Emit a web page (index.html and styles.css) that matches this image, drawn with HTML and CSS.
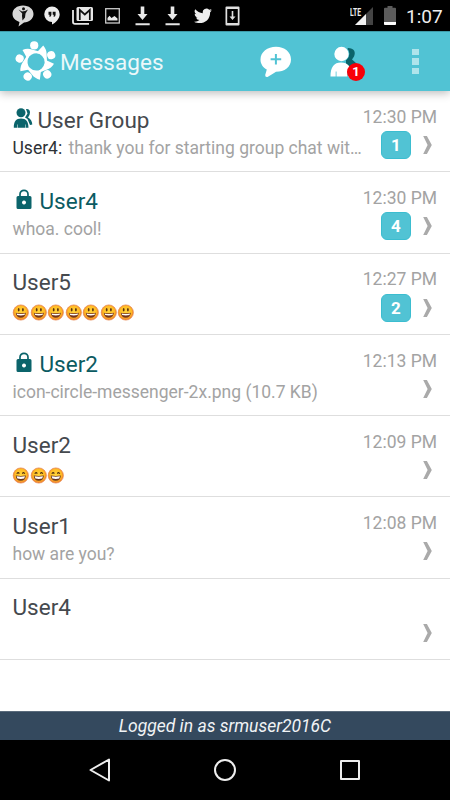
FILE: index.html
```html
<!DOCTYPE html>
<html lang="en">
<head>
<meta charset="utf-8">
<title>Messages</title>
<link rel="stylesheet" href="styles.css">
</head>
<body>
<svg class="defs" aria-hidden="true">
  <defs>
    <radialGradient id="face" cx="50%" cy="45%" r="52%">
      <stop offset="0" stop-color="#ffd43c"/><stop offset=".7" stop-color="#ffbd25"/><stop offset="1" stop-color="#f0812a"/>
    </radialGradient>
    <symbol id="smile" viewBox="0 0 17.5 17">
      <circle cx="8.8" cy="8.5" r="7.6" fill="url(#face)" stroke="#e5824a" stroke-width=".7"/>
      <ellipse cx="6.7" cy="5.7" rx=".9" ry="1.8" fill="#5b3210"/><ellipse cx="10.9" cy="5.7" rx=".9" ry="1.8" fill="#5b3210"/>
      <path d="M3.7 8.7Q8.8 10 13.9 8.7Q13.2 13.8 8.8 13.8T3.7 8.7Z" fill="#76351c"/>
      <path d="M4.6 9.4Q8.8 10.4 13 9.4L12.5 11Q8.8 11.8 5.1 11Z" fill="#fff"/>
    </symbol>
    <symbol id="grin" viewBox="0 0 17.5 17">
      <circle cx="8.8" cy="8.5" r="7.6" fill="url(#face)" stroke="#e5824a" stroke-width=".7"/>
      <path d="M4.8 6.8Q6 4.5 7.3 6.6M10.3 6.6Q11.6 4.5 12.8 6.8" fill="none" stroke="#4a2b10" stroke-width="1.1"/>
      <path d="M3.7 8.5Q8.8 9.3 13.9 8.5Q13.4 13.8 8.8 13.8T3.7 8.5Z" fill="#69351d"/>
      <path d="M4.6 9.3Q8.8 10 13 9.3L12.2 11.6Q8.8 12.4 5.4 11.6Z" fill="#fff"/>
    </symbol>
    <symbol id="lock" viewBox="0 0 16 21">
      <path d="M4 8V5.3a4 4 0 0 1 8 0V8" fill="none" stroke="#0b646b" stroke-width="1.7"/>
      <path fill-rule="evenodd" d="M2 7H14Q15.5 7 15.5 8.5V18.5Q15.5 20 14 20H2Q.5 20 .5 18.500V8.500Q.5 7 2 7ZM8 11.500a2 2 0 1 0 .01 0Z" fill="#0b646b"/>
    </symbol>
    <symbol id="chevron" viewBox="0 0 9 18">
      <path d="M.2 0H3.900L8.800 9L3.900 18H.2L4.600 9Z" fill="#aaa"/>
    </symbol>
  </defs>
</svg>
<div class="screen">
  <div class="status">
    <div class="notices">
      <svg width="22" height="22" viewBox="0 0 22 22"><path d="M11 .5C17 .5 21.500 4 21.500 9S17 17 12 17.500L6.500 21.500 7.500 17C3 15.500.5 12.500.5 9 .5 4 5 .5 11 .5Z" fill="#d8d8d8"/><circle cx="11.500" cy="3.800" r="1.500" fill="#111"/><path d="M6.500 4.500 10 6.500 13 6 16 4.500 13.500 8.500 13 12.500 10.500 15.500 10 11 10.200 8.500Z" fill="#111"/></svg>
      <svg width="16" height="19" viewBox="0 0 16 19"><path d="M8 .5a7.700 7.700 0 0 1 7.700 7.700C15.700 12.500 12 16.500 8 18.500V16A7.700 7.700 0 1 1 8 .5Z" fill="#ededed"/><path d="M4.500 5.700H7.400V8.700Q7.400 10.500 5.500 11V8.700H4.500ZM8.700 5.700H11.600V8.700Q11.600 10.500 9.700 11V8.700H8.700Z" fill="#111"/></svg>
      <svg width="21" height="19" viewBox="0 0 21 19"><path d="M1 4V16Q1 17.800 3 17.800H17" fill="none" stroke="#e8e8e8" stroke-width="1.800"/><rect x="4.500" y="1" width="16.500" height="14" rx="1.500" fill="#e8e8e8"/><path d="M7.800 14V4L12.800 8.500 17.800 4V14" fill="none" stroke="#111" stroke-width="1.700"/></svg>
      <svg width="15" height="16" viewBox="0 0 15 16"><rect x=".7" y=".7" width="13.600" height="14.300" fill="none" stroke="#ccc" stroke-width="1.300"/><path d="M2.500 12.500V10L4.500 7.800 6.500 10 9.500 8 12.500 10.500V12.500Z" fill="#e8e8e8"/></svg>
      <svg width="15" height="20" viewBox="0 0 15 20"><path d="M5.700.5H9.300V8H12.500L7.500 14 2.500 8H5.700ZM.5 17.300H14.700V19.300H.5Z" fill="#e8e8e8"/></svg>
      <svg width="15" height="20" viewBox="0 0 15 20"><path d="M5.700.5H9.300V8H12.500L7.500 14 2.500 8H5.700ZM.5 17.300H14.700V19.300H.5Z" fill="#e8e8e8"/></svg>
      <svg width="18" height="16" viewBox="0 0 24 20"><path fill="#eee" d="M24 2.400a10 10 0 0 1-2.800.8A5 5 0 0 0 23.300.5a10 10 0 0 1-3.100 1.200A4.900 4.900 0 0 0 11.800 6.200 14 14 0 0 1 1.700 1 4.900 4.900 0 0 0 3.200 7.600 5 5 0 0 1 1 7a4.900 4.900 0 0 0 3.900 4.900 5 5 0 0 1-2.200.1 4.900 4.900 0 0 0 4.600 3.400A10 10 0 0 1 0 17.500C9 22.500 21.700 18 21.500 5Z"/></svg>
      <svg width="15" height="20" viewBox="0 0 15 20"><path fill="#e0e0e0" fill-rule="evenodd" d="M1.500.5H13.500Q14.500.5 14.500 1.500V18.500Q14.500 19.500 13.500 19.500H1.500Q.5 19.500.5 18.500V1.500Q.5.500 1.500.5ZM2.200 3V17H12.800V3ZM6.700 5H8.300V10.500H10.500L7.500 14 4.500 10.500H6.700Z"/></svg>
    </div>
    <div class="signal">
      <span class="lte">LTE</span>
      <svg width="18" height="18" viewBox="0 0 18 18"><path d="M18 0V18H0Z" fill="#444"/><path d="M11 7V18H0Z" fill="#f2f2f2"/></svg>
    </div>
    <svg class="battery" width="12" height="19" viewBox="0 0 12 19"><path d="M3.500 0H8.500V1.700H11Q12 1.700 12 2.700V18Q12 19 11 19H1Q0 19 0 18V2.700Q0 1.700 1 1.700H3.500Z" fill="#5b5b5b"/><path d="M0 16H12V18Q12 19 11 19H1Q0 19 0 18Z" fill="#fff"/></svg>
    <span class="clock">1:07</span>
  </div>

  <header class="bar">
    <svg class="logo" width="42" height="42" viewBox="-21 -21 42 42">
      <g fill="#fff">
        <g id="person"><circle cx="-1.800" cy="-16.600" r="4.100"/><path d="M-13.500-12Q-9-14-4-12.500L4-10.300 3-8.500Q-5-9.500-8.500-3Z"/></g>
        <use href="#person" transform="rotate(72)"/><use href="#person" transform="rotate(144)"/><use href="#person" transform="rotate(216)"/><use href="#person" transform="rotate(288)"/>
      </g>
    </svg>
    <h1 class="title">Messages</h1>
    <svg class="compose" width="32" height="32" viewBox="0 0 32 32"><path d="M16 .8C24.500.8 31 6 31 13.500S24.500 25.800 16 25.800Q12 28.500 7.500 31 5 31.500 5.200 29L6.800 23.500C3 21.500.5 18 .5 13.500.5 6 7.500.8 16 .8Z" fill="#fff"/><path d="M15.900 8V18.500M10.600 13.250H21.200" stroke="#51c3d4" stroke-width="2"/></svg>
    <div class="contacts">
      <svg width="28" height="32" viewBox="0 0 28 32"><path d="M18 2C24 2 26 6 24 10.500L22 13.500 26 17 27 21H16V4Z" fill="#0b646b"/><circle cx="11.500" cy="7.700" r="7.800" fill="#51c3d4"/><circle cx="11.500" cy="8" r="7.200" fill="#fff"/><path d="M.5 30.500C.5 21 4 16.500 11 16.500S22 21 22 30.500H18V25H17.300V30.500H6.500V25.500H5.700V30.500Z" fill="#fff"/></svg>
      <span class="alert">1</span>
    </div>
    <div class="more"><i></i><i></i><i></i></div>
  </header>

  <main class="list">
    <article class="row">
      <div class="body">
        <h2 class="name"><svg class="group" width="20" height="20" viewBox="0 0 20 20"><path d="M13 1Q17 .5 17 4.500 17 7 15 9.500 19 11.500 19.300 16.500L17 17 14.500 11 12 9.500 14.500 5.500Z" fill="#0b646b"/><circle cx="8" cy="4.800" r="4.500" fill="#0b646b"/><path d="M.8 19.700C.8 13.500 3 10.500 8 10.500S15.500 13.500 15.500 19.700H12.700V16.500H12.200V19.700H4.500V16.500H4V19.700Z" fill="#0b646b"/></svg>User Group</h2>
        <p class="preview"><b>User4:</b> thank you for starting group chat wit…</p>
      </div>
      <div class="meta"><time>12:30 PM</time><div class="end"><span class="count">1</span><svg class="chevron"><use href="#chevron"/></svg></div></div>
    </article>
    <article class="row">
      <div class="body">
        <h2 class="name secure"><svg class="lock"><use href="#lock"/></svg>User4</h2>
        <p class="preview">whoa. cool!</p>
      </div>
      <div class="meta"><time>12:30 PM</time><div class="end"><span class="count">4</span><svg class="chevron"><use href="#chevron"/></svg></div></div>
    </article>
    <article class="row">
      <div class="body">
        <h2 class="name">User5</h2>
        <p class="preview faces"><svg><use href="#smile"/></svg><svg><use href="#smile"/></svg><svg><use href="#smile"/></svg><svg><use href="#smile"/></svg><svg><use href="#smile"/></svg><svg><use href="#smile"/></svg><svg><use href="#smile"/></svg></p>
      </div>
      <div class="meta"><time>12:27 PM</time><div class="end"><span class="count">2</span><svg class="chevron"><use href="#chevron"/></svg></div></div>
    </article>
    <article class="row">
      <div class="body">
        <h2 class="name secure"><svg class="lock"><use href="#lock"/></svg>User2</h2>
        <p class="preview">icon-circle-messenger-2x.png (10.7 KB)</p>
      </div>
      <div class="meta"><time>12:13 PM</time><div class="end"><svg class="chevron"><use href="#chevron"/></svg></div></div>
    </article>
    <article class="row">
      <div class="body">
        <h2 class="name">User2</h2>
        <p class="preview faces"><svg><use href="#grin"/></svg><svg><use href="#grin"/></svg><svg><use href="#grin"/></svg></p>
      </div>
      <div class="meta"><time>12:09 PM</time><div class="end"><svg class="chevron"><use href="#chevron"/></svg></div></div>
    </article>
    <article class="row">
      <div class="body">
        <h2 class="name">User1</h2>
        <p class="preview">how are you?</p>
      </div>
      <div class="meta"><time>12:08 PM</time><div class="end"><svg class="chevron"><use href="#chevron"/></svg></div></div>
    </article>
    <article class="row">
      <div class="body"><h2 class="name">User4</h2></div>
      <div class="meta"><time></time><div class="end"><svg class="chevron"><use href="#chevron"/></svg></div></div>
    </article>
  </main>

  <footer class="account">Logged in as srmuser2016C</footer>
  <nav class="nav">
    <svg width="24" height="26" viewBox="0 0 24 26"><path d="M21 2.500V23.500L2.500 13Z" fill="none" stroke="#eee" stroke-width="2" stroke-linejoin="round"/></svg>
    <svg width="24" height="24" viewBox="0 0 24 24"><circle cx="12" cy="12" r="10" fill="none" stroke="#eee" stroke-width="2"/></svg>
    <svg width="24" height="24" viewBox="0 0 24 24"><rect x="3" y="3" width="18" height="18" fill="none" stroke="#eee" stroke-width="2" stroke-linejoin="round"/></svg>
  </nav>
</div>
</body>
</html>
```
FILE: styles.css
```css
* { box-sizing: border-box; }
body { margin: 0; font-family: Roboto, "Liberation Sans", sans-serif; background: #fff; }
h1, h2, p { margin: 0; font-weight: 400; }
.defs { position: absolute; width: 0; height: 0; }
.screen { width: 450px; height: 800px; display: flex; flex-direction: column; overflow: hidden; }

.status { height: 31px; flex: none; background: #000; color: #eee; display: flex; align-items: center; padding: 0 10px 0 12px; }
.notices { display: flex; align-items: center; gap: 12px; }
.notices svg { flex: none; }
.notices svg:nth-child(2) { margin-left: -2px; }
.notices svg:nth-child(5), .notices svg:nth-child(6) { margin-left: 3px; }
.notices svg:nth-child(7) { margin-left: 2px; }
.notices svg:nth-child(8) { margin-left: 1px; }
.signal { display: flex; align-items: flex-start; margin-left: auto; }
.lte { font: 700 11px/11px Roboto, sans-serif; width: 12px; transform: scaleX(.62); transform-origin: left; margin-right: -7px; }
.battery { margin: 0 10px 0 11px; }
.clock { font-size: 19px; line-height: 31px; padding-top: 2px; width: 34px; white-space: nowrap; }

.bar { height: 60px; flex: none; background: #51c3d4; display: flex; align-items: center; padding: 0 31px 0 15px; position: relative; box-shadow: 0 2px 9px rgba(0, 0, 0, .28); border-top: 1px solid #3e9caa; }
.logo { flex: none; margin-top: 1px; }
.title { font-size: 22.5px; line-height: 30px; color: #ecf8fa; margin-left: 3px; padding-top: 1px; letter-spacing: .05px; }
.compose { margin-left: auto; }
.contacts { position: relative; width: 28px; height: 32px; margin-left: 38px; }
.alert { position: absolute; left: 17px; top: 17px; width: 18px; height: 18px; border-radius: 50%; background: #f80008; color: #fff; font-size: 13px; line-height: 18px; font-weight: 700; text-align: center; }
.more { display: flex; flex-direction: column; gap: 3px; margin-left: 54px; }
.more i { width: 7px; height: 6.500px; background: #afe4eb; }

.list { flex: 1; }
.row { height: 81.25px; border-bottom: 1px solid #dedede; display: flex; padding: 13.800px 13px 0 12.500px; justify-content: space-between; }
.body { min-width: 0; flex: 0 1 351px; padding-top: 1px; }
.name { font-size: 22.500px; line-height: 28px; color: #45494e; display: flex; align-items: center; }
.secure { color: #0b5b62; }
.group { margin: -3px 5px 0 0; }
.lock { width: 16px; height: 21px; margin: -3px 8px 0 3px; }
.preview { font-size: 17.500px; line-height: 24px; margin-top: 2px; color: #a3a3a3; white-space: nowrap; }
.preview b { font-weight: 400; color: #2e3236; margin-right: 2px; }
.faces { display: flex; align-items: center; height: 24px; padding-top: 5px; }
.faces svg { flex: none; width: 17.500px; height: 17px; margin-left: -.2px; margin-right: .2px; }
.meta { width: 75px; flex: none; margin-left: -2px; display: flex; flex-direction: column; align-items: flex-end; }
.meta time { font-size: 17.500px; line-height: 24px; height: 24px; color: #a3a3a3; white-space: nowrap; }
.end { display: flex; align-items: center; height: 28px; margin-top: 2.300px; padding-right: 5px; }
.count { width: 30px; height: 28px; border-radius: 6px; background: #51c3d4; border: 1px solid #3bbdd0; color: #fff; font-size: 17px; font-weight: 700; line-height: 26px; text-align: center; margin-right: 12px; }
.chevron { width: 9px; height: 18px; }

.account { height: 29px; flex: none; background: #34495e; border-top: 1px solid #5a6b7c; color: #f0f3f5; font-size: 17.500px; line-height: 28px; font-style: italic; text-align: center; }
.nav { height: 60px; flex: none; background: #000; display: flex; align-items: center; justify-content: space-between; padding: 0 88px; }
```
